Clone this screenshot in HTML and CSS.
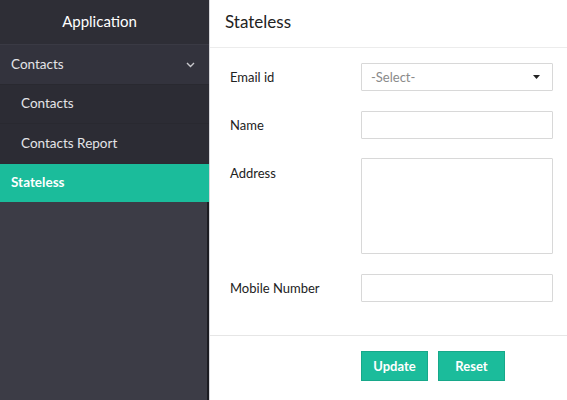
FILE: index.html
```html
<!DOCTYPE html>
<html>
<head>
<meta charset="utf-8">
<link rel="stylesheet" href="styles.css">
</head>
<body>
<div class="app">
  <aside class="sidebar">
    <div class="brand">Application</div>
    <div class="nav-group">
      <span>Contacts</span>
      <svg class="chev" width="9" height="6" viewBox="0 0 9 6"><path d="M1 1 L4.5 4.5 L8 1" fill="none" stroke="#c8c8cc" stroke-width="1.4"/></svg>
    </div>
    <div class="nav-sub">Contacts</div>
    <div class="nav-sub">Contacts Report</div>
    <div class="nav-item active">Stateless</div>
  </aside>
  <main class="main">
    <h1 class="title">Stateless</h1>
    <form class="form">
      <div class="row">
        <label>Email id</label>
        <div class="select"><span>-Select-</span><svg width="7" height="4" viewBox="0 0 7 4"><path d="M0 0 H7 L3.5 4 Z" fill="#222"/></svg></div>
      </div>
      <div class="row">
        <label>Name</label>
        <div class="input"></div>
      </div>
      <div class="row">
        <label>Address</label>
        <div class="input textarea"></div>
      </div>
      <div class="row">
        <label>Mobile Number</label>
        <div class="input"></div>
      </div>
    </form>
    <div class="actions">
      <button class="btn" type="button">Update</button>
      <button class="btn" type="button">Reset</button>
    </div>
  </main>
</div>
</body>
</html>
```
FILE: styles.css
```css
* { box-sizing: border-box; }
html, body { margin: 0; height: 100%; }
body { font-family: Lato, "Liberation Sans", sans-serif; background: #fff; }
.app { display: flex; height: 400px; }
.sidebar {
  width: 211px;
  background: #3c3c46;
  border-right: 1px solid #d8d8dc;
  box-shadow: inset -2px 0 0 #1c1c22;
  display: flex; flex-direction: column;
}
.brand {
  height: 45px; background: #2e2e36; color: #fff;
  font-size: 15px; display: flex; align-items: center; justify-content: center;
  padding: 0 10px 2px 0;
  border-bottom: 1px solid #3a3a44;
}
.nav-group {
  height: 39px; background: #33333d; color: #e4e4e8;
  font-size: 13.5px; display: flex; align-items: center; justify-content: space-between;
  padding: 0 14px 2px 11px;
}
.nav-sub {
  height: 39px; background: #2c2c34; color: #e4e4e8; font-size: 13.5px;
  display: flex; align-items: center; padding: 0 0 2px 21px;
  border-top: 1px solid #292930;
}
.nav-sub + .nav-sub { height: 40px; }
.nav-item {
  height: 39px; font-size: 13.5px; display: flex; align-items: center; padding: 0 0 2px 11px;
}
.nav-item.active { background: #1bbc9b; color: #fff; font-weight: 700; border-top: 1px solid #2b2b33; }
.chev { margin-top: 2px; }
.main { flex: 1; display: flex; flex-direction: column; }
.title {
  margin: 0; height: 48px; font-size: 17px; font-weight: 400; color: #222;
  padding: 11px 0 0 15px; border-bottom: 1px solid #ececec;
}
.form { padding: 15px 14px 0 20px; display: flex; flex-direction: column; gap: 20px; height: 288px; border-bottom: 1px solid #e6e6e6; }
.row { display: flex; align-items: flex-start; }
.row label { width: 131px; font-size: 13px; color: #222; padding-top: 6px; }
.select, .input {
  width: 192px; height: 28px; border: 1px solid #d8d8d8; border-radius: 1px; background: #fff;
}
.row:nth-child(3) .input { margin-top: -1px; }
.select { display: flex; align-items: center; justify-content: space-between; padding: 0 12px 0 9px; font-size: 13px; color: #8a8a8a; }
.textarea { height: 96px; }
.actions { display: flex; gap: 10px; padding: 15px 0 0 151px; }
.btn {
  width: 67px; height: 30px; background: #1bbc9b; color: #fff; border: 1px solid #17a88a;
  font-family: inherit; font-size: 13px; font-weight: 700; padding: 0;
}
```
